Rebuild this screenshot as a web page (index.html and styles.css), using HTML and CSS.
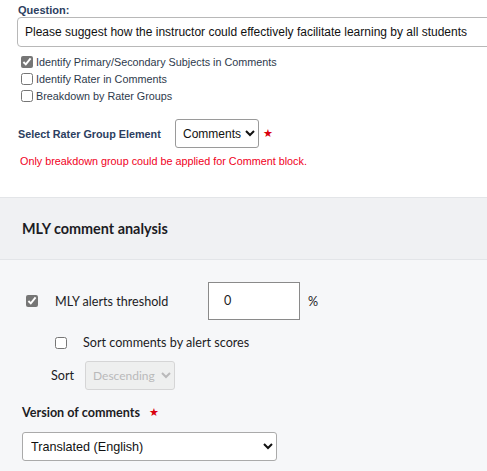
FILE: index.html
```html
<!DOCTYPE html>
<html>
<head>
<meta charset="utf-8">
<link rel="stylesheet" href="styles.css">
</head>
<body>
<div class="top">
  <div class="q-label">Question:</div>
  <div class="q-input">Please suggest how the instructor could effectively facilitate learning by all students</div>
  <div class="checks">
    <label class="chk"><input type="checkbox" class="cb-on" checked><span>Identify Primary/Secondary Subjects in Comments</span></label>
    <label class="chk"><input type="checkbox"><span>Identify Rater in Comments</span></label>
    <label class="chk"><input type="checkbox"><span>Breakdown by Rater Groups</span></label>
  </div>
  <div class="rater-row">
    <span class="rater-label">Select Rater Group Element</span>
    <select class="sel-comments"><option>Comments</option></select>
    <span class="star">★</span>
  </div>
  <div class="warn">Only breakdown group could be applied for Comment block.</div>
</div>
<div class="panel">
  <div class="panel-head">MLY comment analysis</div>
  <div class="panel-body">
    <div class="row-threshold">
      <input type="checkbox" class="cb-thr cb-on" checked>
      <span class="thr-label">MLY alerts threshold</span>
      <div class="thr-input">0</div>
      <span class="pct">%</span>
    </div>
    <div class="row-sort-cb">
      <input type="checkbox" class="cb-sort">
      <span class="sort-label">Sort comments by alert scores</span>
    </div>
    <div class="row-sort">
      <span class="sort-word">Sort</span>
      <select class="sel-sort" disabled><option>Descending</option></select>
    </div>
    <div class="ver-label">Version of comments <span class="star star2">★</span></div>
    <select class="sel-ver"><option>Translated (English)</option></select>
  </div>
</div>
</body>
</html>
```
FILE: styles.css
```css
html, body {
  margin: 0;
  padding: 0;
  background: #ffffff;
  width: 487px;
  height: 471px;
  overflow: hidden;
  font-family: Arial, "Liberation Sans", sans-serif;
}
.top {
  padding: 3px 0 0 17px;
}
.q-label {
  font-weight: bold;
  font-size: 11px;
  line-height: 14px;
  color: #2c3e60;
  padding-left: 1px;
}
.q-input {
  box-sizing: border-box;
  width: 480px;
  height: 30px;
  border: 1px solid #b8b8b8;
  border-radius: 4px;
  font-size: 12px;
  line-height: 28px;
  padding-left: 7px;
  color: #111;
  white-space: nowrap;
  overflow: hidden;
}
.checks {
  display: flex;
  flex-direction: column;
  margin-top: 6px;
  padding-left: 4px;
}
.chk {
  display: flex;
  align-items: center;
  height: 17px;
  font-size: 10.8px;
  color: #2e3a4c;
}
.chk input {
  margin: 0 3px 0 0;
  width: 12px;
  height: 12px;
}
.cb-on {
  accent-color: #767676;
}
.rater-row {
  display: flex;
  align-items: center;
  margin-top: 15px;
  height: 29px;
  padding-left: 1px;
}
.rater-label {
  font-weight: bold;
  font-size: 10.8px;
  color: #2c3e60;
  width: 157px;
}
.sel-comments {
  box-sizing: border-box;
  width: 84px;
  height: 29px;
  border: 1px solid #9a9a9a;
  border-radius: 3px;
  font-family: Arial, "Liberation Sans", sans-serif;
  font-size: 12px;
  color: #111;
  background: #fff;
  padding: 0 0 0 3px;
}
.star {
  color: #d9000d;
  font-size: 11px;
  margin-left: 4px;
  font-family: "DejaVu Sans", sans-serif;
}
.warn {
  margin-top: 7px;
  padding-left: 3px;
  font-size: 10.8px;
  line-height: 13px;
  color: #f0001c;
}
.panel {
  box-sizing: border-box;
  margin-top: 29px;
  border-top: 1px solid #e3e5e8;
  background: #f6f7f9;
  font-family: Lato, "Open Sans", sans-serif;
  height: 274px;
}
.panel-head {
  background: #f0f1f3;
  border-bottom: 1px solid #e3e5e8;
  box-sizing: border-box;
  height: 62px;
  display: flex;
  align-items: center;
  padding-left: 22px;
  font-weight: bold;
  font-size: 14.4px;
  color: #1c1c24;
}
.panel-body {
  padding: 22px 0 0 22px;
  font-size: 12.6px;
  color: #1c1c24;
}
.row-threshold {
  display: flex;
  align-items: center;
  height: 38px;
}
.cb-thr {
  margin: 0 0 0 4px;
  width: 12px;
  height: 12px;
}
.thr-label {
  margin-left: 17px;
  width: 153px;
}
.thr-input {
  box-sizing: border-box;
  width: 92px;
  height: 38px;
  border: 1px solid #8a8a8a;
  background: #fff;
  padding-left: 15px;
  line-height: 36px;
  font-size: 12.6px;
}
.pct {
  margin-left: 8px;
}
.row-sort-cb {
  display: flex;
  align-items: center;
  margin-top: 14px;
  height: 17px;
  padding-left: 33px;
}
.cb-sort {
  margin: 0;
  width: 12px;
  height: 12px;
}
.sort-label {
  margin-left: 16px;
}
.row-sort {
  display: flex;
  align-items: center;
  margin-top: 10px;
  height: 29px;
  padding-left: 29px;
}
.sort-word {
  width: 34px;
}
.sel-sort {
  box-sizing: border-box;
  width: 90px;
  height: 29px;
  border: 1px solid #c8c8c8;
  border-radius: 3px;
  background: #ececec;
  color: #a0a0a0;
  font-family: Lato, "Open Sans", sans-serif;
  font-size: 12px;
  padding: 0 0 0 3px;
}
.ver-label {
  margin-top: 13px;
  font-weight: bold;
  height: 20px;
  line-height: 20px;
  display: flex;
  align-items: center;
}
.star2 {
  margin-left: 9px;
}
.sel-ver {
  margin-top: 9px;
  box-sizing: border-box;
  width: 255px;
  height: 29px;
  border: 1px solid #aaa;
  border-radius: 3px;
  background: #fff;
  font-family: Arial, "Liberation Sans", sans-serif;
  font-size: 12.6px;
  color: #111;
  padding: 0 4px;
}
```
